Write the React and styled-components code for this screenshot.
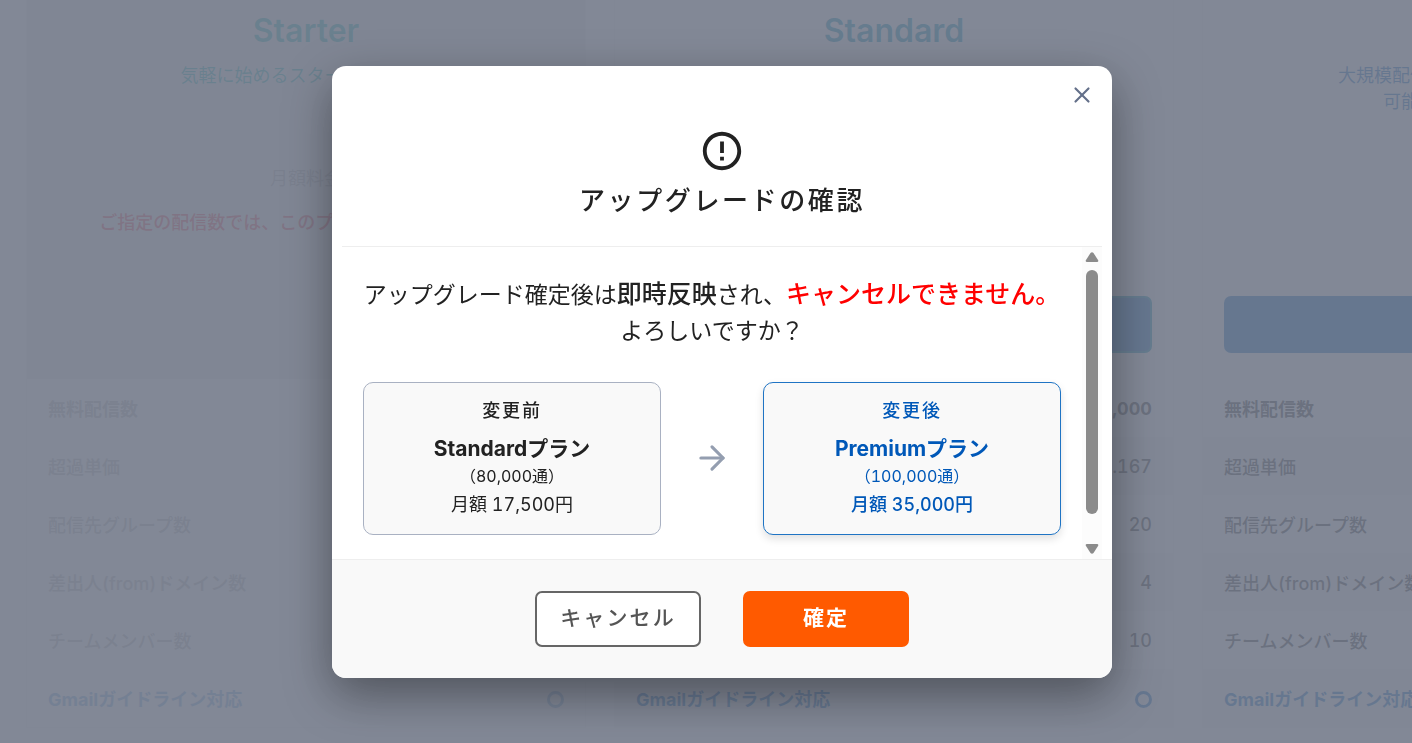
import React from 'react';
import styled, { createGlobalStyle, css } from 'styled-components';
import { ArrowRight, X } from 'lucide-react';
import { MdErrorOutline } from 'react-icons/md';

const plans = [
  {
    name: 'Starter',
    color: '#2cb8b4',
    desc: '気軽に始めるスタータープラン',
    note: 'ご指定の配信数では、このプランは選択できません',
    disabled: true,
    values: ['1,000', '0.3', '1', '1', '1', '○'],
  },
  {
    name: 'Standard',
    color: '#0090b8',
    desc: '本格的な配信を始める方に',
    current: true,
    values: ['80,000', '0.167', '20', '4', '10', '○'],
  },
  {
    name: 'Premium',
    color: '#0768c1',
    desc: '大規模配信と高度な配信の管理まで\n可能な充実した高機能版',
    values: ['100,000', '0.35', '50', '10', '30', '○'],
  },
];

const features = [
  '無料配信数',
  '超過単価',
  '配信先グループ数',
  '差出人(from)ドメイン数',
  'チームメンバー数',
  'Gmailガイドライン対応',
];

function Plan({ plan }) {
  return (
    <PlanCard $disabled={plan.disabled}>
      <PlanHead $disabled={plan.disabled}>
        <PlanName $color={plan.color}>{plan.name}</PlanName>
        <PlanDesc $color={plan.color}>{plan.desc}</PlanDesc>
        <PlanPrice>月額料金</PlanPrice>
        {plan.note && <PlanNote>{plan.note}</PlanNote>}
        {!plan.disabled && (
          <SelectButton type="button" $current={plan.current}>
            このプランを選択
          </SelectButton>
        )}
      </PlanHead>
      <FeatureTable $disabled={plan.disabled}>
        <tbody>
          {features.map((feature, i) => (
            <FeatureRow
              key={feature}
              $bold={i === 0}
              $link={i === features.length - 1}
            >
              <th scope="row">{feature}</th>
              <td>{plan.values[i] === '○' ? <Circle /> : plan.values[i]}</td>
            </FeatureRow>
          ))}
        </tbody>
      </FeatureTable>
    </PlanCard>
  );
}

function App() {
  return (
    <>
      <GlobalStyle />
      <Page>
        {plans.map((plan) => (
          <Plan key={plan.name} plan={plan} />
        ))}
      </Page>

      <Overlay>
        <Modal role="dialog" aria-modal="true" aria-labelledby="modal-title">
          <ModalHeader>
            <CloseButton type="button" aria-label="閉じる">
              <X size={26} strokeWidth={2} />
            </CloseButton>
            <MdErrorOutline size={46} />
            <Title id="modal-title">アップグレードの確認</Title>
          </ModalHeader>

          <ModalBody>
            <Content>
              <Message>
                アップグレード確定後は<strong>即時反映</strong>され、
                <Warning>キャンセルできません。</Warning>
                <br />
                よろしいですか？
              </Message>
              <Compare>
                <CompareCard>
                  <CardLabel>変更前</CardLabel>
                  <CardName>Standardプラン</CardName>
                  <CardCount>（80,000通）</CardCount>
                  <CardPrice>月額 17,500円</CardPrice>
                </CompareCard>
                <ArrowRight size={38} strokeWidth={2} color="#949eb0" />
                <CompareCard $after>
                  <CardLabel>変更後</CardLabel>
                  <CardName>Premiumプラン</CardName>
                  <CardCount>（100,000通）</CardCount>
                  <CardPrice $after>月額 35,000円</CardPrice>
                </CompareCard>
              </Compare>
            </Content>
            <ScrollBar aria-hidden="true">
              <ScrollArrow />
              <ScrollTrack>
                <ScrollThumb />
              </ScrollTrack>
              <ScrollArrow $down />
            </ScrollBar>
          </ModalBody>

          <ModalFooter>
            <FooterButton type="button">キャンセル</FooterButton>
            <FooterButton type="button" $primary>
              確定
            </FooterButton>
          </ModalFooter>
        </Modal>
      </Overlay>
    </>
  );
}

function ScrollArrow({ $down }) {
  return (
    <svg width="14" height="10" viewBox="0 0 14 10">
      <path
        d={
          $down
            ? 'M2 0h10q2 0 1 2L8.500 9q-1.500 1.500-3 0L1 2Q0 0 2 0z'
            : 'M2 10h10q2 0 1-2L8.500 1q-1.500-1.500-3 0L1 8Q0 10 2 10z'
        }
        fill="#8b8b8b"
      />
    </svg>
  );
}

export default App;

const GlobalStyle = createGlobalStyle`
  * {
    box-sizing: border-box;
  }
  body {
    margin: 0;
    overflow: hidden;
    background-color: #ffffff;
    color: #222222;
    font-family: Inter, 'Noto Sans CJK JP', sans-serif;
    font-size: 18px;
    font-variant-numeric: tabular-nums;
  }
  button {
    font-family: inherit;
    cursor: pointer;
  }
`;

const Page = styled.main`
  height: 100vh;
  overflow: hidden;
  display: grid;
  grid-auto-flow: column;
  grid-auto-columns: 560px;
  justify-content: start;
  align-items: start;
  gap: 28px;
  padding-left: 26px;
`;

const PlanCard = styled.section`
  border: 1px solid #f4f4f4;
  border-top: none;
  color: ${(props) => (props.$disabled ? '#b8b8b8' : '#333333')};
`;

const PlanHead = styled.div`
  height: 379px;
  padding: 11px 21px 26px;
  background-color: ${(props) => (props.$disabled ? '#eeeeee' : 'transparent')};
  display: flex;
  flex-direction: column;
  align-items: center;
`;

const PlanName = styled.h2`
  margin: 0;
  font-size: 32px;
  font-weight: 600;
  line-height: 40px;
  color: ${(props) => props.$color};
`;

const PlanDesc = styled.p`
  margin: 12px 0 0;
  min-height: 52px;
  line-height: 26px;
  text-align: center;
  white-space: pre-line;
  color: ${(props) => props.$color};
`;

const PlanPrice = styled.span`
  margin-top: 51px;
  line-height: 26px;
`;

const PlanNote = styled.p`
  margin: 18px 0 0;
  line-height: 26px;
  font-weight: 500;
  color: #ec4c60;
`;

const SelectButton = styled.button`
  width: 100%;
  height: 57px;
  margin-top: auto;
  border: 2px solid ${(props) => (props.$current ? '#0090b8' : '#0768c1')};
  border-radius: 7px;
  background-color: #0768c1;
  color: #ffffff;
  font-size: 18px;
`;

const FeatureTable = styled.table`
  width: 100%;
  border-collapse: collapse;
  color: ${(props) => (props.$disabled ? '#777777' : 'inherit')};
  opacity: ${(props) => (props.$disabled ? 0.5 : 1)};
`;

const FeatureRow = styled.tr`
  height: 58px;
  font-weight: ${(props) => (props.$bold || props.$link ? 700 : 500)};
  color: ${(props) => (props.$link ? '#0768c1' : 'inherit')};
  &:nth-child(even) {
    background-color: #f4f4f4;
  }
  th {
    padding: 0 0 0 21px;
    font-weight: inherit;
    text-align: left;
  }
  td {
    padding: 0 21px 0 0;
    text-align: right;
  }
`;

const Circle = styled.span`
  display: inline-block;
  width: 17px;
  height: 17px;
  border: 3px solid currentColor;
  border-radius: 50%;
  vertical-align: middle;
`;

const Overlay = styled.div`
  position: fixed;
  inset: 0;
  padding-left: 32px;
  background-color: rgba(115, 121, 137, 0.89);
  display: flex;
  justify-content: center;
  align-items: center;
`;

const Modal = styled.div`
  width: 780px;
  max-width: 94%;
  border-radius: 14px;
  background-color: #ffffff;
  box-shadow: 0 16px 48px rgba(0, 0, 0, 0.4);
  overflow: hidden;
`;

const ModalHeader = styled.header`
  position: relative;
  margin: 0 10px;
  padding: 62px 0 27px;
  border-bottom: 1px solid #eeeeee;
  display: flex;
  flex-direction: column;
  align-items: center;
`;

const CloseButton = styled.button`
  position: absolute;
  top: 16px;
  right: 7px;
  padding: 0;
  border: none;
  background: none;
  color: #64708a;
  display: flex;
`;

const Title = styled.h1`
  margin: 9px 0 0;
  font-size: 26px;
  font-weight: 500;
  line-height: 36px;
  letter-spacing: 0.1em;
`;

const ModalBody = styled.div`
  margin: 0 10px;
  display: flex;
`;

const Content = styled.div`
  flex: 1;
  padding: 30px 21px 24px;
`;

const Message = styled.p`
  margin: 0 0 33px;
  font-size: 23px;
  line-height: 36px;
  text-align: center;
  strong {
    font-size: 25px;
    font-weight: 500;
    line-height: 1;
  }
`;

const Warning = styled.strong`
  color: #ff0000;
`;

const Compare = styled.div`
  display: flex;
  justify-content: space-between;
  align-items: center;
`;

const CompareCard = styled.div`
  width: 298px;
  padding: 14px 10px 15px;
  border: 1px solid #a9b1c2;
  border-radius: 10px;
  background-color: #f9f9f9;
  display: flex;
  flex-direction: column;
  align-items: center;
  ${(props) =>
    props.$after &&
    css`
      border-color: #1f74c4;
      color: #0058b8;
      box-shadow: 0 4px 8px rgba(0, 0, 0, 0.12);
    `}
`;

const CardLabel = styled.span`
  margin-bottom: 8px;
  font-weight: 500;
  line-height: 28px;
  letter-spacing: 0.1em;
`;

const CardName = styled.span`
  font-size: 21px;
  font-weight: 700;
  line-height: 32px;
`;

const CardCount = styled.span`
  font-size: 16px;
  line-height: 22px;
`;

const CardPrice = styled.span`
  margin-top: 4px;
  font-weight: ${(props) => (props.$after ? 500 : 400)};
  line-height: 28px;
`;

const ScrollBar = styled.div`
  width: 20px;
  padding: 5px 0;
  background-color: #fcfcfc;
  display: flex;
  flex-direction: column;
  align-items: center;
`;

const ScrollTrack = styled.div`
  flex: 1;
  width: 12px;
  padding: 8px 0;
`;

const ScrollThumb = styled.div`
  height: 92%;
  border-radius: 6px;
  background-color: #8b8b8b;
`;

const ModalFooter = styled.footer`
  padding: 31px 20px;
  border-top: 1px solid #eeeeee;
  background-color: #f9f9f9;
  display: flex;
  justify-content: center;
  gap: 42px;
`;

const FooterButton = styled.button`
  width: 166px;
  height: 56px;
  padding: 0 0 6px;
  border: 2px solid ${(props) => (props.$primary ? '#ff5a00' : '#666666')};
  border-radius: 7px;
  background-color: ${(props) => (props.$primary ? '#ff5a00' : '#ffffff')};
  color: ${(props) => (props.$primary ? '#ffffff' : '#555555')};
  font-size: 21px;
  font-weight: ${(props) => (props.$primary ? 700 : 500)};
  letter-spacing: 0.1em;
`;
